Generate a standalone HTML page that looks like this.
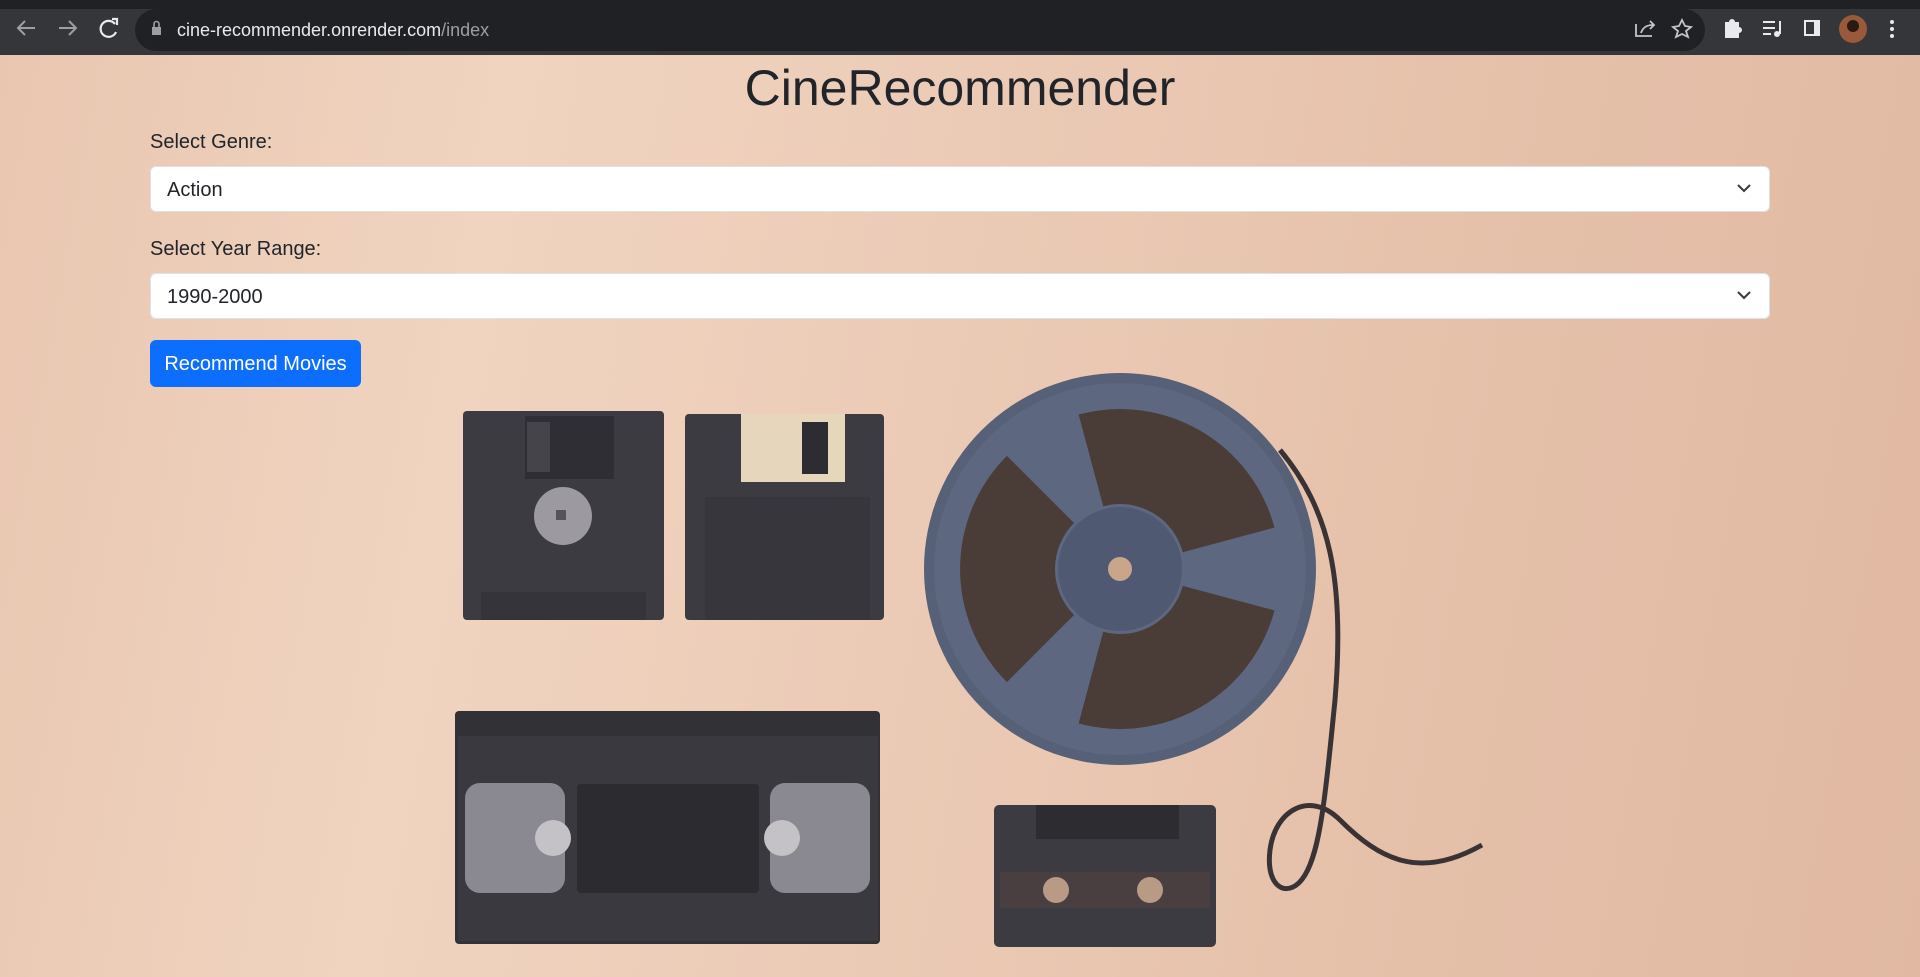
<!DOCTYPE html>
<html><head><meta charset="utf-8"><style>
html,body{margin:0;padding:0;width:1920px;height:977px;overflow:hidden;font-family:"Liberation Sans",sans-serif}
body{background:linear-gradient(100deg,#e9c6b0 0%,#f0d4c0 25%,#ebcab5 50%,#e5c0a9 75%,#e1b9a3 100%)}
.bar{position:absolute;left:0;top:0;width:1920px;height:55px;background:#35363a}
.top{position:absolute;left:0;top:0;width:1920px;height:9px;background:#202124}
.url{position:absolute;left:135px;top:9px;width:1570px;height:42px;border-radius:21px;background:#202124}
.t{position:absolute;color:#212529}
.sel{position:absolute;left:150px;width:1618px;height:44px;background:#fff;border:1px solid #dee2e6;border-radius:6px}
.sel span{position:absolute;left:16px;top:12px;font-size:20px;color:#212529}
.btn{position:absolute;left:150px;top:340px;width:211px;height:47px;background:#0d6efd;border-radius:6px;color:#fff;font-size:20px;line-height:48px;text-align:center}
</style></head><body>
<div class="bar"></div><div class="top"></div>
<div class="url"></div>
<svg style="position:absolute;left:0;top:0" width="1920" height="55">
<g stroke="#9aa0a6" stroke-width="2" fill="none">
<path d="M35 28H18M25 21l-7 7 7 7"/><path d="M59 28h17M69 21l7 7-7 7"/>
</g>
<path d="M115 24a8 8 0 1 0 1 8" stroke="#e8eaed" stroke-width="2.2" fill="none"/><path d="M112 19h5v6" stroke="#e8eaed" stroke-width="2.2" fill="none"/>
<rect x="152" y="27" width="9" height="8" fill="#9aa0a6"/><path d="M154 27v-3a2.5 2.5 0 0 1 5 0v3" stroke="#9aa0a6" stroke-width="1.6" fill="none"/>
<text x="177" y="36" font-size="18" fill="#e8eaed" font-family="Liberation Sans">cine-recommender.onrender.com<tspan fill="#9aa0a6">/index</tspan></text>
<g stroke="#c4c7c5" stroke-width="1.8" fill="none">
<path d="M1636 24v12h16M1641 33c2-6 6-8 12-8M1650 21l4 4-4 4"/>
<path d="M1682 20l3 6 6 1-5 4 2 6-6-3-6 3 2-6-5-4 6-1z"/>
</g>
<path d="M1725 22h4a3 3 0 0 1 6 0h4v5a3 3 0 0 1 0 6v5h-14z" fill="#e8eaed"/>
<g stroke="#e8eaed" stroke-width="2"><path d="M1763 22h12M1763 28h12M1763 34h8M1780 21v13"/></g><circle cx="1777" cy="34" r="3" fill="#e8eaed"/>
<rect x="1804" y="20" width="16" height="16" fill="#e8eaed"/><rect x="1806" y="22" width="8" height="12" fill="#35363a"/>
<circle cx="1853" cy="29" r="14" fill="#9a5a3a"/><circle cx="1853" cy="26" r="6" fill="#2a1a12"/>
<g fill="#e8eaed"><circle cx="1892" cy="22" r="2"/><circle cx="1892" cy="29" r="2"/><circle cx="1892" cy="36" r="2"/></g>
</svg>
<div class="t" style="left:0;width:1920px;top:58px;text-align:center;font-size:50px;line-height:60px">CineRecommender</div>
<div class="t" style="left:150px;top:131px;font-size:20px">Select Genre:</div>
<div class="sel" style="top:166px"><span>Action</span></div>
<div class="t" style="left:150px;top:238px;font-size:20px">Select Year Range:</div>
<div class="sel" style="top:273px"><span>1990-2000</span></div>
<svg style="position:absolute;left:1736px;top:182px" width="16" height="12"><path d="M2 3l6 6 6-6" stroke="#343a40" stroke-width="2" fill="none"/></svg>
<svg style="position:absolute;left:1736px;top:289px" width="16" height="12"><path d="M2 3l6 6 6-6" stroke="#343a40" stroke-width="2" fill="none"/></svg>
<div class="btn">Recommend Movies</div>
<svg style="position:absolute;left:0;top:0" width="1920" height="977">
<!-- floppy 1 -->
<rect x="463" y="411" width="201" height="209" rx="4" fill="#3c3b42"/>
<rect x="525" y="416" width="89" height="63" fill="#2f2e35"/>
<rect x="527" y="422" width="23" height="50" fill="#45444b"/>
<circle cx="563" cy="516" r="29" fill="#9c9aa0"/><rect x="556" y="510" width="10" height="10" fill="#55545a"/>
<rect x="481" y="592" width="165" height="28" fill="#35343a"/>
<!-- floppy 2 -->
<rect x="685" y="414" width="199" height="206" rx="4" fill="#3c3b42"/>
<rect x="741" y="414" width="104" height="68" fill="#e6d6bc"/><rect x="802" y="422" width="26" height="52" fill="#2d2c32"/>
<rect x="705" y="497" width="165" height="123" fill="#37363d"/>
<!-- tape strip -->
<path d="M1280 450C1330 510 1345 580 1335 700C1325 800 1320 850 1305 875C1290 900 1265 890 1270 850C1275 810 1310 790 1340 820C1380 860 1420 880 1482 845" stroke="#3a3336" stroke-width="5" fill="none"/>
<!-- reel -->
<circle cx="1120" cy="569" r="196" fill="#566077"/>
<circle cx="1120" cy="569" r="186" fill="#5d6880"/>
<g fill="#4a3c37">
<path d="M1078.6 414.5A160 160 0 0 1 1274.5 527.6L1182.8 552.2A65 65 0 0 0 1103.2 506.2Z"/>
<path d="M1078.6 414.5A160 160 0 0 1 1274.5 527.6L1182.8 552.2A65 65 0 0 0 1103.2 506.2Z" transform="rotate(120 1120 569)"/>
<path d="M1078.6 414.5A160 160 0 0 1 1274.5 527.6L1182.8 552.2A65 65 0 0 0 1103.2 506.2Z" transform="rotate(240 1120 569)"/>
</g>
<circle cx="1120" cy="569" r="62" fill="#4f5a72"/><circle cx="1120" cy="569" r="12" fill="#c9a58a"/>
<!-- VHS -->
<rect x="455" y="711" width="425" height="233" rx="4" fill="#323136"/>
<rect x="458" y="736" width="420" height="205" fill="#3a393f"/>
<rect x="465" y="783" width="100" height="110" rx="15" fill="#8a8890"/>
<rect x="770" y="783" width="100" height="110" rx="15" fill="#8a8890"/>
<circle cx="553" cy="838" r="18" fill="#c4c2c6"/><circle cx="782" cy="838" r="18" fill="#c4c2c6"/>
<rect x="577" y="784" width="182" height="109" rx="4" fill="#2c2b30"/>
<!-- cassette -->
<rect x="994" y="805" width="222" height="142" rx="5" fill="#3c3b41"/>
<rect x="1036" y="805" width="143" height="34" fill="#2d2c31"/>
<rect x="1000" y="872" width="210" height="36" fill="#4a3f40"/>
<circle cx="1056" cy="890" r="13" fill="#b89a85"/><circle cx="1150" cy="890" r="13" fill="#b89a85"/>
</svg>
</body></html>
